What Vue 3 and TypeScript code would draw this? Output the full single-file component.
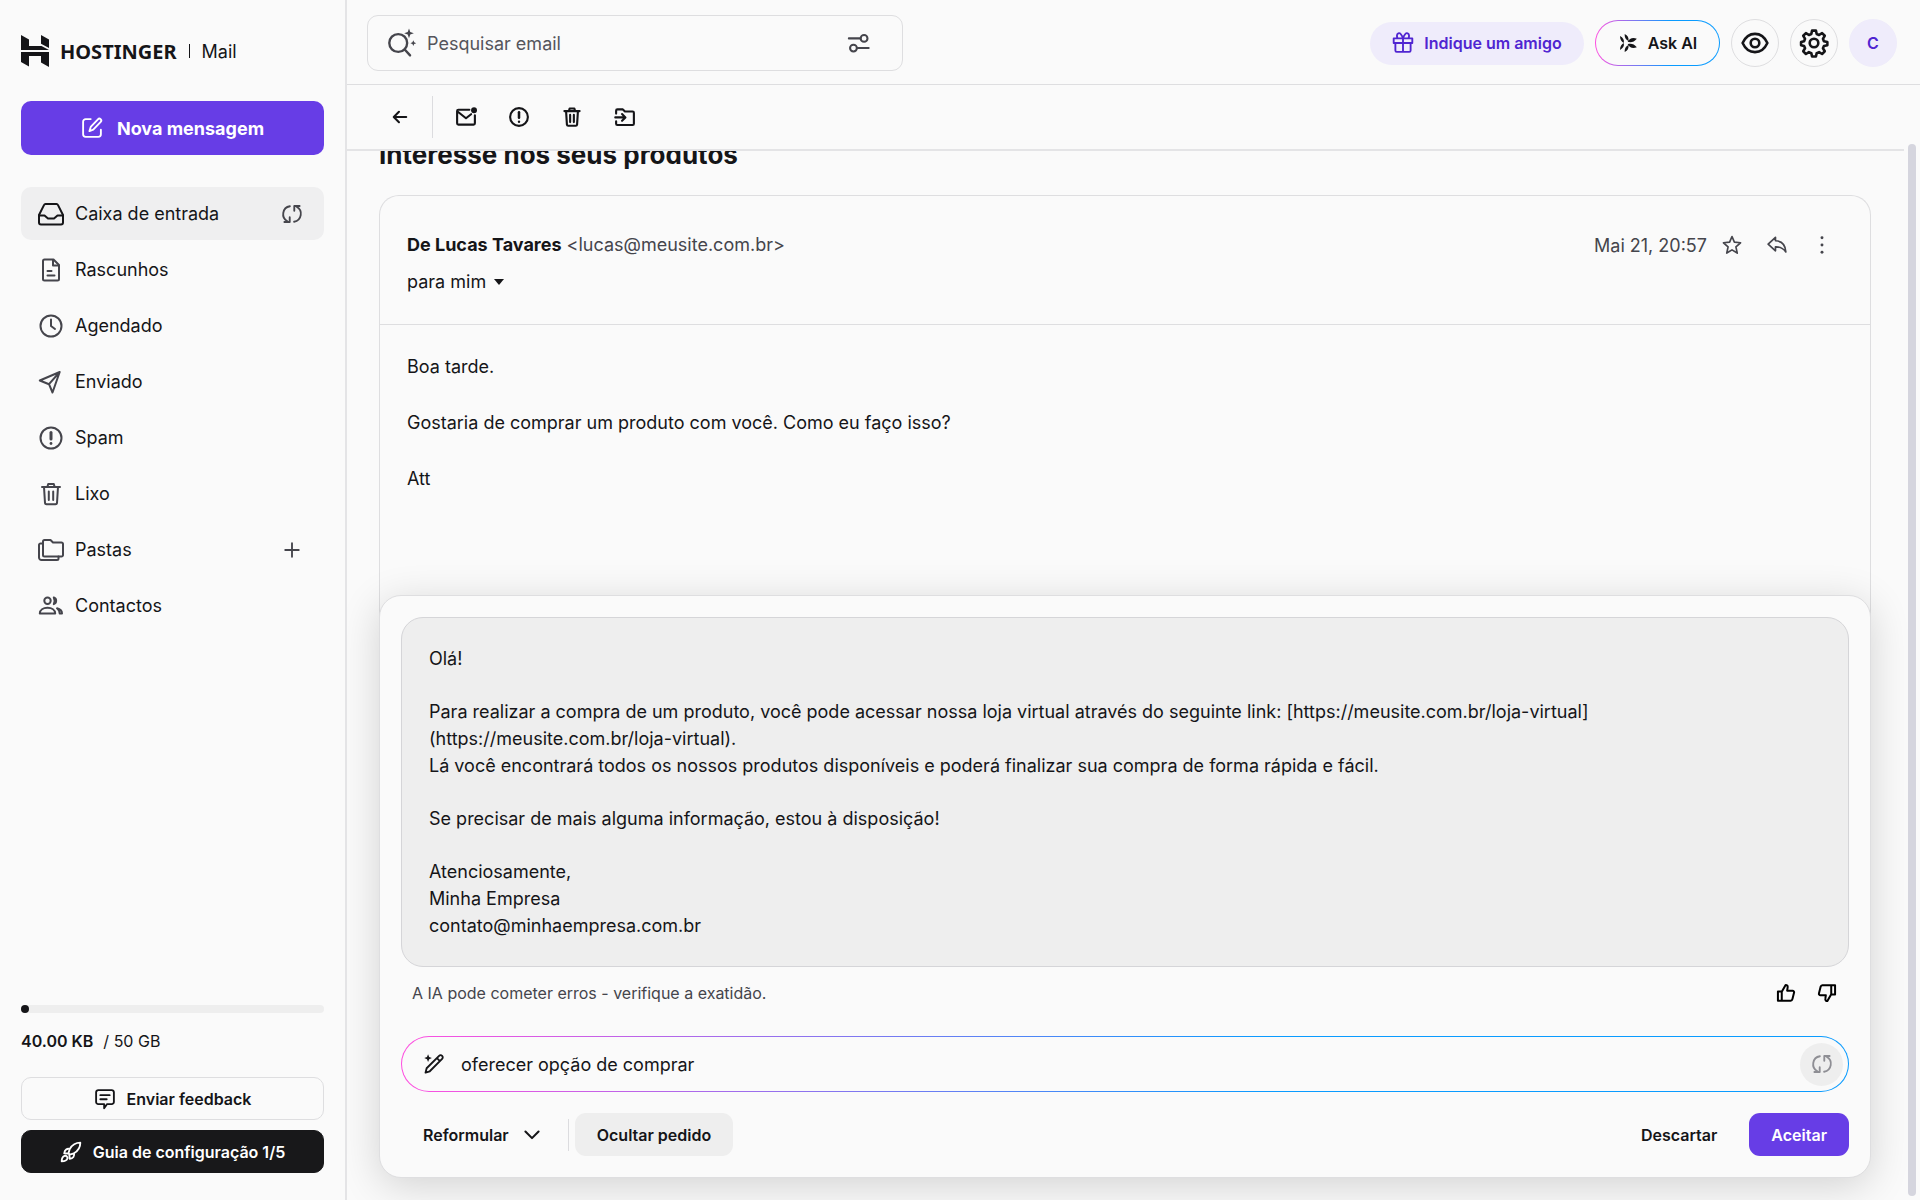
<script setup lang="ts">
import { ref } from 'vue'

interface Folder {
  name: string
  icon: string
  current?: boolean
  action?: string
  actionLabel?: string
}

// Upper half of the assistant mark; the lower half is its mirror image.
const petals =
  'M2.600 4C6.500 6 8.500 9 7.500 13 5 12 2.500 8.500 2.600 4ZM8.700 1.200C12.500 3 14.500 6 13.500 10.300 10 8.500 8.300 5.500 8.700 1.200ZM12.500 11.500C15 7 19 5.500 24.500 7.500 21 11.800 17 12.700 12.500 11.500Z'

const icons: Record<string, string> = {
  tray: '<path d="M7.500 3h11a1.500 1.500 0 0 1 1.400.9L25 14v7.500a2 2 0 0 1-2 2H3a2 2 0 0 1-2-2V14L6.100 3.900A1.500 1.500 0 0 1 7.500 3Z"/><path d="M1 14.500h5.500l3.500 3h6l3.500-3H25"/>',
  draft: '<path d="M6.500 2.500h9l5.500 5.500V22a1.500 1.500 0 0 1-1.500 1.500h-13A1.500 1.500 0 0 1 5 22V4a1.500 1.500 0 0 1 1.500-1.500Z"/><path d="M15 3v5.500h5.500M9.500 14h4M9.500 18.500h7"/>',
  clock: '<circle cx="13" cy="13" r="10.500"/><path d="M13 6.500V13l4 3"/>',
  send: '<path d="M21.700 3 1.800 11.500l9.200 3.700 3.500 8.300ZM11 15.200 21.700 3"/>',
  alert: '<circle cx="13" cy="13" r="10.500"/><path d="M13 7.500v6.500" stroke-width="3"/><path d="M13 18.400v.2" stroke-width="2.800"/>',
  trash: '<path d="M4 6h18M9.500 5.500l.7-2.500h5.600l.7 2.500M6 6l1 16a1.500 1.500 0 0 0 1.500 1.300h9A1.500 1.500 0 0 0 19 22L20 6M10.800 10.500v8.500M15.200 10.500v8.500"/>',
  folders: '<path d="M6.500 3h6l2.500 2.500h8.500A1.500 1.500 0 0 1 25 7v11a1.500 1.500 0 0 1-1.500 1.500h-17A1.500 1.500 0 0 1 5 18V4.500A1.500 1.500 0 0 1 6.500 3Z"/><path d="M5 6.500H3A1.500 1.500 0 0 0 1 8v12.500A2.500 2.500 0 0 0 3.500 23H19a1.500 1.500 0 0 0 1.500-1.500v-2"/>',
  people: '<circle cx="9.500" cy="7.800" r="3.200"/><path d="M1.800 20.500c0-3.700 3.500-5.700 7.700-5.700s7.700 2 7.700 5.700Z"/><path d="M15.800 4.500a3.500 3.500 0 0 1 0 6.600c1-2 1-4.600 0-6.600ZM19 15.300c3 .8 5 2.500 5 5.200h-2.300c0-2-.9-3.800-2.700-5.200Z"/>',
  sync: '<path d="M10.500 3.800a9.500 9.500 0 0 0-3 17.700M4 22.500h6.300v-5.700M15.500 22.200a9.500 9.500 0 0 0 3-17.700M22 3.500h-6.300v5.700"/>',
  plus: '<path d="M13 5v16M5 13h16"/>',
  compose: '<path d="M11.500 2.500H5.500a3 3 0 0 0-3 3v15a3 3 0 0 0 3 3h15a3 3 0 0 0 3-3v-5.500"/><path d="M20 2.700a2.200 2.200 0 0 1 3.300 3.100L14.500 15l-4.500 1.700 1.500-4.900Z"/>',
  feedback: '<path d="M5 2.500h16A2.500 2.500 0 0 1 23.500 5v11.500a2.500 2.500 0 0 1-2.500 2.500h-5.500L12 24v-5H5a2.500 2.500 0 0 1-2.500-2.500V5A2.500 2.500 0 0 1 5 2.500ZM7.500 8.500h11M7.500 13.300h7.500"/>',
  rocket: '<path d="M24 2c-5.500 0-9.500 2.500-12.500 7.500l-1.500 5 1.500 1.500 5-1.500c5-3 7.500-7 7.500-12.500ZM11.500 9.500c-3-1-6 1-6.500 5l5 .5M16.500 14.500c1 3.500-1 6-5 6.500l-.5-5M5.500 17.500c-2.500.8-3.500 3-3.500 6.500 3.500 0 6-1 6.800-3.300.3-2-1.300-3.700-3.300-3.200Z"/>',
  searchAi: '<circle cx="9.500" cy="13" r="8.300"/><path d="m15.500 19 5 5.500"/><path d="M19.500-.5l1.200 3.300L24 4l-3.300 1.200-1.200 3.300-1.200-3.300L15 4l3.300-1.200ZM23.500 10.500l.8 1.900 1.900.8-1.900.8-.8 1.900-.8-1.900-1.900-.8 1.900-.8Z" fill="currentColor" stroke="none"/>',
  filter: '<path d="M2 8h12.500M11.500 18.500h12"/><circle cx="18.500" cy="8" r="3.700"/><circle cx="7" cy="18.500" r="3.700"/>',
  back: '<path d="M22 13H4.500M11.500 5.500 4 13l7.500 7.500"/>',
  unread: '<path d="M17 4.500H4A1.500 1.500 0 0 0 2.500 6v14.500A1.500 1.500 0 0 0 4 22h18a1.500 1.500 0 0 0 1.500-1.500V11M3 6.500l10 8 6-4.800"/><circle cx="22.500" cy="5" r="3.500" fill="currentColor" stroke="none"/>',
  move: '<path d="M2.500 9V5.500A1.500 1.500 0 0 1 4 4h6.500L13 6.500h9A1.500 1.500 0 0 1 23.500 8v13a1.500 1.500 0 0 1-1.500 1.500H4A1.500 1.500 0 0 1 2.500 21v-3M1.500 13.500H13M9.500 9.500l4 4-4 4"/>',
  star: '<path d="m13 2 3.100 7.300 8 .8-6 5.300 1.700 8.100-6.800-4.200-6.800 4.200 1.700-8.100-6-5.300 8-.8Z"/>',
  reply: '<path d="M11 3 1.500 12l9.500 8.500v-5c5.500-.3 10 1.500 13.500 6.500-.5-9-5-14-13.500-14.500Z"/>',
  dots: '<g fill="currentColor" stroke="none"><circle cx="13" cy="3.500" r="1.900"/><circle cx="13" cy="13" r="1.900"/><circle cx="13" cy="22.500" r="1.900"/></g>',
  gift: '<path d="M2 7.500h22v5.500H2ZM4 13v9a1.500 1.500 0 0 0 1.500 1.500h15A1.500 1.500 0 0 0 22 22v-9M13 7.500v16M13 7.500C11 2 9.500.8 7.500 1.500 5.500 2.300 5.500 5 6.500 7.500M13 7.500c2-5.500 3.500-6.700 5.500-6 2 .8 2 3.500 1 6"/>',
  spark: `<g fill="currentColor" stroke="none"><path d="${petals}"/><path transform="matrix(1 0 0 -1 0 26)" d="${petals}"/></g>`,
  eye: '<path d="M1.500 13C4 7.500 8 4.500 13 4.500s9 3 11.500 8.500c-2.500 5.500-6.500 8.500-11.500 8.500S4 18.500 1.500 13Z"/><circle cx="13" cy="13" r="4"/>',
  gear: '<path d="M11.200 1.500h3.600l.7 3.200 2.200.9 2.800-1.800 2.500 2.500-1.700 2.800.9 2.200 3.200.7v3l-3.200.7-.9 2.200 1.700 2.800-2.500 2.500-2.800-1.700-2.200.9-.7 3.200h-3.600l-.7-3.200-2.200-.9-2.800 1.700L3 20.700l1.700-2.800-.9-2.200-2.800-.7v-3l2.800-.7.9-2.200L3 6.300l2.500-2.500 2.800 1.800 2.200-.9Z"/><circle cx="13" cy="13" r="4"/>',
  up: '<path d="M2.500 11h5v12h-5ZM7.500 11.500 12.500 2.500c2 0 3 1.500 2.600 3.500L14.500 10h7a2 2 0 0 1 2 2.500l-2.200 8.500A2.500 2.500 0 0 1 19 23H7.500"/>',
  down: '<path d="M23.500 15h-5V3h5ZM18.500 14.500 13.500 23.500c-2 0-3-1.500-2.600-3.500l.6-4h-7a2 2 0 0 1-2-2.500L4.700 5A2.500 2.500 0 0 1 7 3h11.500"/>',
  wand: '<path d="M3 23.200l1.300-5.200L19 3.300a2.500 2.500 0 0 1 3.600 3.600L8 21.600ZM16.500 6l3.500 3.500"/><path d="M6 1.500l1.300 3.200L10.500 6 7.300 7.300 6 10.500 4.700 7.300 1.500 6l3.200-1.300Z" fill="currentColor" stroke="none"/>',
  chevron: '<path d="m3.500 8 9.500 9.500L22.500 8"/>',
}

const folders: Folder[] = [
  { name: 'Caixa de entrada', icon: 'tray', current: true, action: 'sync', actionLabel: 'Atualizar' },
  { name: 'Rascunhos', icon: 'draft' },
  { name: 'Agendado', icon: 'clock' },
  { name: 'Enviado', icon: 'send' },
  { name: 'Spam', icon: 'alert' },
  { name: 'Lixo', icon: 'trash' },
  { name: 'Pastas', icon: 'folders', action: 'plus', actionLabel: 'Nova pasta' },
  { name: 'Contactos', icon: 'people' },
]

const tools = [
  { icon: 'unread', label: 'Marcar como não lido' },
  { icon: 'alert', label: 'Spam' },
  { icon: 'trash', label: 'Excluir' },
  { icon: 'move', label: 'Mover' },
]

const message = ['Boa tarde.', 'Gostaria de comprar um produto com você. Como eu faço isso?', 'Att']

const draft: string[][] = [
  ['Olá!'],
  [
    'Para realizar a compra de um produto, você pode acessar nossa loja virtual através do seguinte link: [https://meusite.com.br/loja-virtual]',
    '(https://meusite.com.br/loja-virtual).',
    'Lá você encontrará todos os nossos produtos disponíveis e poderá finalizar sua compra de forma rápida e fácil.',
  ],
  ['Se precisar de mais alguma informação, estou à disposição!'],
  ['Atenciosamente,', 'Minha Empresa', 'contato@minhaempresa.com.br'],
]

const search = ref('')
const prompt = ref('oferecer opção de comprar')
</script>

<template>
  <div class="app">
    <aside class="sidebar">
      <a class="brand" href="#">
        <svg class="mark" viewBox="0 0 28 32" aria-hidden="true">
          <path d="M0 0 8 4.500v6.500h12.500L28 15H0ZM20 0l8 4.500V13l-8-4.200ZM0 17h28v15l-8-4.500V21H8v10.500L0 27Z" />
        </svg>
        <span class="wordmark">HOSTINGER</span>
        <span class="bar"></span>
        <span class="product">Mail</span>
      </a>
      <button class="compose" type="button">
        <svg class="icon i22" viewBox="0 0 26 26" v-html="icons.compose"></svg>
        Nova mensagem
      </button>
      <nav class="folders">
        <div v-for="f in folders" :key="f.name" class="folder" :class="{ current: f.current }">
          <a href="#"><svg class="icon i26" viewBox="0 0 26 26" v-html="icons[f.icon]"></svg>{{ f.name }}</a>
          <button v-if="f.action" type="button" class="plain" :aria-label="f.actionLabel">
            <svg class="icon i22" viewBox="0 0 26 26" v-html="icons[f.action]"></svg>
          </button>
        </div>
      </nav>
      <div class="storage">
        <div class="track"><div class="fill"></div></div>
        <p><b>40.00 KB</b><span>/ 50 GB</span></p>
      </div>
      <button class="side-btn" type="button">
        <svg class="icon i22" viewBox="0 0 26 26" v-html="icons.feedback"></svg>
        Enviar feedback
      </button>
      <button class="side-btn dark" type="button">
        <svg class="icon i22" viewBox="0 0 26 26" v-html="icons.rocket"></svg>
        Guia de configuração 1/5
      </button>
    </aside>

    <main class="main">
      <header class="top">
        <div class="search">
          <svg class="icon i28" viewBox="0 0 26 26" v-html="icons.searchAi"></svg>
          <input v-model="search" type="text" placeholder="Pesquisar email" aria-label="Pesquisar email" />
          <button type="button" class="plain" aria-label="Filtros">
            <svg class="icon i24" viewBox="0 0 26 26" v-html="icons.filter"></svg>
          </button>
        </div>
        <div class="actions">
          <button class="refer" type="button">
            <svg class="icon i22" viewBox="0 0 26 26" v-html="icons.gift"></svg>
            Indique um amigo
          </button>
          <button class="ask" type="button">
            <svg class="icon i20" viewBox="0 0 26 26" v-html="icons.spark"></svg>
            Ask AI
          </button>
          <button class="round" type="button" aria-label="Visualização">
            <svg class="icon i28" viewBox="0 0 26 26" v-html="icons.eye"></svg>
          </button>
          <button class="round" type="button" aria-label="Configurações">
            <svg class="icon i28" viewBox="0 0 26 26" v-html="icons.gear"></svg>
          </button>
          <button class="round avatar" type="button">C</button>
        </div>
      </header>

      <div class="toolbar">
        <button class="plain" type="button" aria-label="Voltar">
          <svg class="icon i18" viewBox="0 0 26 26" v-html="icons.back"></svg>
        </button>
        <span class="split"></span>
        <button v-for="t in tools" :key="t.label" class="plain" type="button" :aria-label="t.label">
          <svg class="icon i22" viewBox="0 0 26 26" v-html="icons[t.icon]"></svg>
        </button>
      </div>

      <div class="scroller">
        <h1>Interesse nos seus produtos</h1>
        <article class="mail">
          <header class="mail-head">
            <div class="from">
              <p><b>De Lucas Tavares</b> <span>&lt;lucas@meusite.com.br&gt;</span></p>
              <button class="plain to" type="button">
                para mim
                <svg class="caret" viewBox="0 0 10 6" aria-hidden="true"><path d="M0 0h10L5 6Z" /></svg>
              </button>
            </div>
            <div class="meta">
              <time>Mai 21, 20:57</time>
              <button class="plain" type="button" aria-label="Favoritar">
                <svg class="icon i20" viewBox="0 0 26 26" v-html="icons.star"></svg>
              </button>
              <button class="plain" type="button" aria-label="Responder">
                <svg class="icon i20" viewBox="0 0 26 26" v-html="icons.reply"></svg>
              </button>
              <button class="plain" type="button" aria-label="Mais">
                <svg class="icon i20" viewBox="0 0 26 26" v-html="icons.dots"></svg>
              </button>
            </div>
          </header>
          <div class="mail-body">
            <p v-for="line in message" :key="line">{{ line }}</p>
          </div>
        </article>

        <section class="panel">
          <div class="draft">
            <p v-for="(para, i) in draft" :key="i">
              <span v-for="line in para" :key="line">{{ line }}</span>
            </p>
          </div>
          <div class="notice">
            <span>A IA pode cometer erros - verifique a exatidão.</span>
            <div class="votes">
              <button class="plain" type="button" aria-label="Gostei">
                <svg class="icon i20" viewBox="0 0 26 26" v-html="icons.up"></svg>
              </button>
              <button class="plain" type="button" aria-label="Não gostei">
                <svg class="icon i20" viewBox="0 0 26 26" v-html="icons.down"></svg>
              </button>
            </div>
          </div>
          <div class="prompt">
            <svg class="icon i22" viewBox="0 0 26 26" v-html="icons.wand"></svg>
            <input v-model="prompt" type="text" aria-label="Pedido" />
            <button class="again" type="button" aria-label="Gerar novamente">
              <svg class="icon i22" viewBox="0 0 26 26" v-html="icons.sync"></svg>
            </button>
          </div>
          <div class="footer">
            <button class="btn rephrase" type="button">
              Reformular
              <svg class="icon i18" viewBox="0 0 26 26" v-html="icons.chevron"></svg>
            </button>
            <span class="split short"></span>
            <button class="btn soft" type="button">Ocultar pedido</button>
            <span class="grow"></span>
            <button class="btn" type="button">Descartar</button>
            <button class="btn primary" type="button">Aceitar</button>
          </div>
        </section>
      </div>
      <div class="scrollbar" aria-hidden="true"></div>
    </main>
  </div>
</template>

<style>
body {
  background: #fafafa;
}
</style>

<style scoped>
.app {
  display: flex;
  height: 100vh;
  font-family: Inter, "Liberation Sans", sans-serif;
  font-size: 18px;
  color: #151518;
  background: #fafafa;
}
.app * {
  box-sizing: border-box;
}
p,
h1 {
  margin: 0;
}
b {
  font-weight: 700;
}
button,
input {
  font: inherit;
  color: inherit;
}
button {
  display: flex;
  align-items: center;
  justify-content: center;
  border: 0;
  background: none;
  padding: 0;
  white-space: nowrap;
  cursor: pointer;
}
input {
  min-width: 0;
  border: 0;
  outline: 0;
  padding: 0;
  background: none;
}
a {
  color: inherit;
  text-decoration: none;
}
.icon {
  flex: none;
  overflow: visible;
  fill: none;
  stroke: currentColor;
  stroke-width: 2.2;
  stroke-linecap: round;
  stroke-linejoin: round;
}
.i18 { width: 18px; height: 18px; stroke-width: 3; }
.i20 { width: 20px; height: 20px; }
.i22 { width: 22px; height: 22px; }
.i24 { width: 24px; height: 24px; }
.i26 { width: 26px; height: 26px; stroke-width: 2; }
.i28 { width: 28px; height: 28px; }

/* Sidebar */
.sidebar {
  display: flex;
  flex-direction: column;
  flex: none;
  width: 347px;
  padding: 35px 21px 27px;
  border-right: 2px solid #e4e4e6;
}
.brand {
  display: flex;
  align-items: center;
  height: 32px;
}
.mark {
  width: 28px;
  height: 32px;
  margin-right: 11px;
  fill: #151518;
}
.wordmark {
  font-family: "Noto Sans", sans-serif;
  font-size: 20px;
  font-weight: 700;
}
.bar {
  width: 1px;
  height: 14px;
  margin: 0 12px;
  background: #151518;
}
.product {
  font-size: 18px;
}
.compose {
  flex: none;
  gap: 14px;
  height: 54px;
  margin-top: 34px;
  border-radius: 10px;
  background: #673de6;
  color: #fff;
  font-weight: 700;
}
.folders {
  display: flex;
  flex-direction: column;
  gap: 3px;
  margin-top: 32px;
}
.folder {
  display: flex;
  align-items: center;
  height: 53px;
  padding: 0 21px 0 17px;
  border-radius: 10px;
}
.folder a {
  display: flex;
  align-items: center;
  gap: 11px;
  flex: 1;
  color: #151518;
}
.folder .icon {
  color: #45454c;
}
.folder.current {
  background: #efeff0;
}
.folder.current a .icon {
  color: #151518;
}
.storage {
  margin-top: auto;
}
.track {
  height: 8px;
  border-radius: 4px;
  background: #eee;
}
.fill {
  width: 8px;
  height: 8px;
  border-radius: 4px;
  background: #151518;
}
.storage p {
  display: flex;
  gap: 10px;
  padding: 18px 0 26px;
  font-size: 16px;
  line-height: 20px;
}
.storage b {
  font-weight: 600;
}
.side-btn {
  flex: none;
  gap: 11px;
  height: 43px;
  border: 1px solid #dedee0;
  border-radius: 10px;
  font-size: 16px;
  font-weight: 600;
}
.side-btn.dark {
  margin-top: 10px;
  border-color: #18181a;
  background: #18181a;
  color: #fff;
}

/* Top bar */
.main {
  position: relative;
  display: flex;
  flex-direction: column;
  flex: 1;
  min-width: 0;
}
.top {
  display: flex;
  align-items: center;
  justify-content: space-between;
  flex: none;
  height: 85px;
  padding: 2px 23px 0 20px;
  border-bottom: 1px solid #dedee0;
}
.search {
  display: flex;
  align-items: center;
  gap: 11px;
  flex: 0 1 536px;
  height: 56px;
  padding: 0 31px 0 20px;
  border: 1px solid #dedee0;
  border-radius: 11px;
  color: #45454c;
}
.search input {
  flex: 1;
}
.search input::placeholder {
  color: #55555c;
  opacity: 1;
}
.actions {
  display: flex;
  align-items: center;
  gap: 11px;
}
.refer {
  gap: 10px;
  width: 214px;
  height: 43px;
  border-radius: 22px;
  background: #efecfb;
  color: #5025d1;
  font-size: 16px;
  font-weight: 600;
}
.ask {
  gap: 10px;
  width: 125px;
  height: 46px;
  border: 1px solid transparent;
  border-radius: 23px;
  background:
    linear-gradient(#fafafa, #fafafa) padding-box,
    linear-gradient(90deg, #ff4fe0, #0a9bff 60%) border-box;
  font-size: 16px;
  font-weight: 600;
}
.round {
  width: 48px;
  height: 48px;
  border: 1px solid #dedee0;
  border-radius: 50%;
}
.round .icon {
  stroke-width: 2.4;
}
.avatar {
  border-color: #efecfb;
  background: #efecfb;
  color: #5025d1;
  font-size: 16px;
  font-weight: 600;
}
.toolbar {
  display: flex;
  align-items: center;
  gap: 31px;
  flex: none;
  height: 66px;
  margin-right: 16px;
  padding-left: 44px;
  border-bottom: 2px solid #e4e4e6;
}
.toolbar .i22 {
  stroke-width: 2.5;
}
.split {
  width: 1px;
  height: 42px;
  background: #dcdcdf;
}
.toolbar .split {
  margin: 0 -9px 0 -8px;
}

/* Message */
.scroller {
  display: flex;
  flex-direction: column;
  flex: 1;
  min-height: 0;
  padding: 0 49px 22px 32px;
  overflow: hidden;
}
h1 {
  flex: none;
  height: 56px;
  margin-top: -12px;
  font-size: 26px;
  line-height: 32px;
  font-weight: 700;
}
.mail {
  display: flex;
  flex-direction: column;
  flex: 1;
  min-height: 0;
  margin-bottom: -22px;
  border: 1px solid #dedee0;
  border-bottom: 0;
  border-radius: 20px 20px 0 0;
}
.mail-head {
  display: flex;
  justify-content: space-between;
  flex: none;
  padding: 35px 38px 28px 27px;
  border-bottom: 1px solid #dedee0;
}
.from {
  display: flex;
  flex-direction: column;
  align-items: flex-start;
  gap: 9px;
  line-height: 28px;
}
.from span,
.meta {
  color: #45454c;
}
.to {
  gap: 8px;
}
.caret {
  width: 10px;
  height: 6px;
  fill: #151518;
}
.meta {
  display: flex;
  align-items: center;
  gap: 25px;
  height: 28px;
}
.meta time {
  margin-right: -10px;
}
.mail-body {
  display: flex;
  flex-direction: column;
  gap: 28px;
  padding: 28px 27px;
  line-height: 28px;
}

/* Reply assistant */
.panel {
  position: relative;
  flex: none;
  padding: 21px;
  border: 1px solid #dedee0;
  border-radius: 22px;
  background: #fafafa;
  box-shadow: 0 8px 40px rgba(0, 0, 0, 0.16);
}
.draft {
  display: flex;
  flex-direction: column;
  gap: 26px;
  padding: 27px;
  border: 1px solid #d5d5d8;
  border-radius: 22px;
  background: #eee;
  line-height: 27px;
}
.draft span {
  display: block;
}
.notice {
  display: flex;
  align-items: center;
  justify-content: space-between;
  height: 52px;
  margin-bottom: 17px;
  padding: 0 12px 0 11px;
  color: #45454c;
  font-size: 16px;
}
.votes {
  display: flex;
  gap: 21px;
  color: #000;
}
.votes .icon {
  stroke-width: 2.6;
}
.prompt {
  display: flex;
  align-items: center;
  gap: 16px;
  height: 56px;
  padding: 0 5px 0 21px;
  border: 1px solid transparent;
  border-radius: 28px;
  background:
    linear-gradient(#fafafa, #fafafa) padding-box,
    linear-gradient(90deg, #ff4fe0, #0a9bff 60%) border-box;
}
.prompt input {
  flex: 1;
}
.again {
  width: 43px;
  height: 43px;
  border-radius: 50%;
  background: #eee;
  color: #8e8e94;
}
.footer {
  display: flex;
  align-items: center;
  gap: 6px;
  margin-top: 21px;
}
.btn {
  height: 43px;
  padding: 0 22px;
  border-radius: 11px;
  font-size: 16px;
  font-weight: 600;
}
.rephrase {
  gap: 14px;
  padding-right: 21px;
}
.short {
  height: 32px;
}
.soft {
  background: #eee;
}
.grow {
  flex: 1;
}
.primary {
  margin-left: 4px;
  background: #673de6;
  color: #fff;
}
.scrollbar {
  position: absolute;
  top: 144px;
  right: 4px;
  bottom: 4px;
  width: 8px;
  border-radius: 4px;
  background: #d5d5de;
}
</style>
